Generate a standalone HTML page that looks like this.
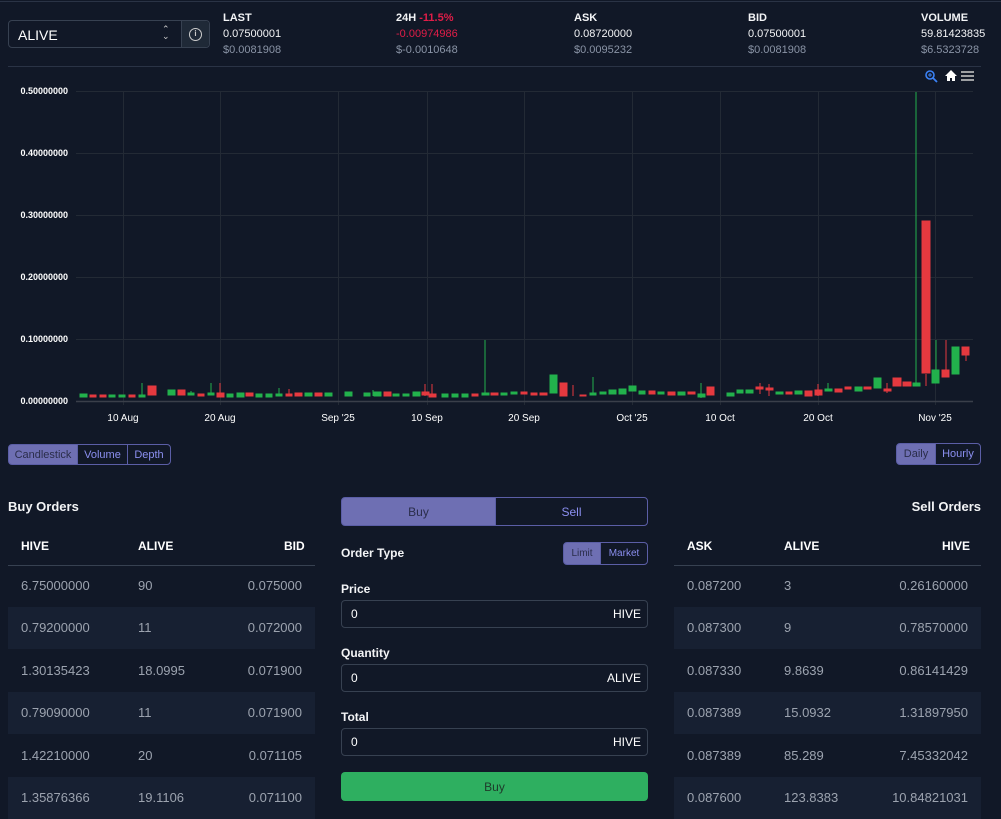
<!DOCTYPE html>
<html><head><meta charset="utf-8"><style>
*{box-sizing:border-box;margin:0;padding:0}
body{width:1001px;height:817px;overflow:hidden;background:#111827;font-family:"Liberation Sans",sans-serif;color:#e5e7eb;position:relative}
.a{position:absolute}
.lbl{font-size:11px;font-weight:bold;color:#f3f4f6}
.v{font-size:11px;color:#f3f4f6}
.u{font-size:11px;color:#8a94a6}
.btn{position:absolute;font-size:11px;display:flex;align-items:center;justify-content:center;border:1px solid #5b5ea6;color:#8b8ff0}
.on{background:#6e6fb3;color:#2a2d4a}
.row{position:relative;height:42.5px;font-size:13px;color:#9ca3af;display:flex;align-items:center}
.row span{position:absolute}
.alt{background:#172032}
.hd{font-size:12px;font-weight:bold;color:#fff}
.inp{position:absolute;left:341px;width:307px;height:28px;border:1px solid #374151;border-radius:4px;font-size:12px;color:#fff;display:flex;align-items:center;justify-content:space-between;padding:0 6px 0 9px}
.fl{position:absolute;left:341px;font-size:12px;font-weight:bold;color:#f3f4f6}
</style></head><body>
<div class="a" style="left:0;top:1px;width:1001px;height:1px;background:#2a3345"></div>
<div class="a" style="left:8px;top:20px;width:202px;height:28px;border:1px solid #374151;border-radius:4px"></div>
<div class="a" style="left:18px;top:27px;font-size:14px;color:#fff">ALIVE</div>
<div class="a" style="left:162px;top:26px;font-size:9px;color:#ccc;line-height:7px">⌃<br>⌄</div>
<div class="a" style="left:181px;top:21px;width:28px;height:26px;background:#1f2937;border-left:1px solid #374151;border-radius:0 4px 4px 0"></div>
<div class="a" style="left:189px;top:28px;width:13px;height:13px;border:1.5px solid #ccc;border-radius:50%;font-size:8px;color:#ccc;text-align:center;line-height:10px;font-weight:bold">i</div>

<div class="a lbl" style="left:223px;top:12px">LAST</div><div class="a v" style="left:223px;top:28px">0.07500001</div><div class="a u" style="left:223px;top:44px">$0.0081908</div>
<div class="a lbl" style="left:396px;top:12px">24H <span style="color:#e11d48">-11.5%</span></div><div class="a v" style="left:396px;top:28px;color:#e11d48">-0.00974986</div><div class="a u" style="left:396px;top:44px">$-0.0010648</div>
<div class="a lbl" style="left:574px;top:12px">ASK</div><div class="a v" style="left:574px;top:28px">0.08720000</div><div class="a u" style="left:574px;top:44px">$0.0095232</div>
<div class="a lbl" style="left:748px;top:12px">BID</div><div class="a v" style="left:748px;top:28px">0.07500001</div><div class="a u" style="left:748px;top:44px">$0.0081908</div>
<div class="a lbl" style="left:921px;top:12px">VOLUME</div><div class="a v" style="left:921px;top:28px">59.81423835</div><div class="a u" style="left:921px;top:44px">$6.5323728</div>
<div class="a" style="left:8px;top:66px;width:973px;height:1px;background:#2a3345"></div>

<svg class="a" style="left:0;top:0" width="1001" height="440">
<g stroke="#232a35" stroke-width="1">
<line x1="76" y1="91.5" x2="973" y2="91.5"/><line x1="76" y1="153.5" x2="973" y2="153.5"/><line x1="76" y1="215.5" x2="973" y2="215.5"/><line x1="76" y1="277.5" x2="973" y2="277.5"/><line x1="76" y1="339.5" x2="973" y2="339.5"/>
<line x1="123.5" y1="91" x2="123.5" y2="405"/><line x1="220.5" y1="91" x2="220.5" y2="405"/><line x1="338.5" y1="91" x2="338.5" y2="405"/><line x1="427.5" y1="91" x2="427.5" y2="405"/><line x1="524.5" y1="91" x2="524.5" y2="405"/><line x1="632.5" y1="91" x2="632.5" y2="405"/><line x1="720.5" y1="91" x2="720.5" y2="405"/><line x1="818.5" y1="91" x2="818.5" y2="405"/><line x1="935.5" y1="91" x2="935.5" y2="405"/>
</g>
<line x1="76" y1="401.5" x2="973" y2="401.5" stroke="#3a3f4a" stroke-width="1.5"/>
<g font-size="9" fill="#fff" font-weight="bold" text-anchor="end">
<text x="68" y="94">0.50000000</text><text x="68" y="156">0.40000000</text><text x="68" y="218">0.30000000</text><text x="68" y="280">0.20000000</text><text x="68" y="342">0.10000000</text><text x="68" y="404">0.00000000</text>
</g>
<g font-size="10" fill="#fff" text-anchor="middle">
<text x="123" y="421">10 Aug</text><text x="220" y="421">20 Aug</text><text x="338" y="421">Sep '25</text><text x="427" y="421">10 Sep</text><text x="524" y="421">20 Sep</text><text x="632" y="421">Oct '25</text><text x="720" y="421">10 Oct</text><text x="818" y="421">20 Oct</text><text x="935" y="421">Nov '25</text>
</g>
<g fill="#22b14c" stroke="#22b14c">
<rect x="80" y="394" width="7" height="3"/><rect x="109" y="395" width="6" height="2"/><rect x="119" y="395" width="6" height="2"/><line x1="142" y1="383" x2="142" y2="396"/><rect x="139" y="395" width="6" height="2"/>
<rect x="168" y="390" width="7" height="5"/><line x1="191" y1="391" x2="191" y2="395"/><rect x="188" y="393" width="6" height="2"/><line x1="211" y1="383" x2="211" y2="395"/><rect x="208" y="393" width="6" height="2"/>
<rect x="227" y="394" width="6" height="3"/><rect x="237" y="393" width="7" height="4"/><rect x="256" y="394" width="6" height="3"/><rect x="266" y="394" width="6" height="3"/><line x1="279" y1="388" x2="279" y2="396"/><rect x="276" y="394" width="6" height="2"/>
<rect x="305" y="393" width="7" height="3"/><rect x="325" y="393" width="7" height="3"/><rect x="345" y="392" width="7" height="4"/><rect x="364" y="393" width="6" height="3"/><line x1="373" y1="390" x2="373" y2="396"/><rect x="374" y="392" width="7" height="4"/>
<rect x="393" y="394" width="6" height="2"/><rect x="403" y="394" width="6" height="2"/><rect x="413" y="392" width="7" height="4"/><rect x="442" y="394" width="6" height="3"/><rect x="452" y="394" width="6" height="3"/><rect x="462" y="394" width="6" height="3"/>
<line x1="485" y1="340" x2="485" y2="394"/><rect x="482" y="393" width="7" height="2"/><rect x="501" y="393" width="6" height="2"/><rect x="511" y="392" width="6" height="2"/>
<rect x="550" y="375" width="7" height="18"/><line x1="593" y1="377" x2="593" y2="394"/><rect x="590" y="393" width="6" height="2"/><rect x="600" y="392" width="6" height="2"/><rect x="609" y="390" width="7" height="4"/><rect x="619" y="389" width="7" height="5"/><rect x="629" y="386" width="7" height="5"/>
<rect x="639" y="391" width="6" height="3"/><rect x="658" y="392" width="6" height="2"/><rect x="678" y="392" width="7" height="3"/><line x1="701" y1="383" x2="701" y2="398"/><rect x="698" y="394" width="7" height="3"/>
<rect x="727" y="393" width="7" height="3"/><rect x="737" y="390" width="6" height="3"/><rect x="746" y="390" width="7" height="3"/><rect x="776" y="392" width="7" height="2"/><rect x="795" y="391" width="7" height="3"/>
<line x1="828" y1="383" x2="828" y2="391"/><rect x="825" y="389" width="7" height="2"/><rect x="855" y="387" width="7" height="4"/><rect x="874" y="378" width="7" height="10"/>
<line x1="916" y1="92" x2="916" y2="386"/><rect x="913" y="383" width="7" height="3"/>
<line x1="936" y1="340" x2="936" y2="383"/><rect x="932" y="370" width="7" height="13"/><rect x="952" y="347" width="7" height="27"/>
</g>
<g fill="#e5393f" stroke="#e5393f">
<rect x="90" y="395" width="6" height="2"/><rect x="100" y="395" width="6" height="2"/><rect x="129" y="395" width="6" height="2"/><rect x="148" y="386" width="8" height="9"/><rect x="178" y="390" width="7" height="5"/><rect x="198" y="394" width="6" height="2"/>
<line x1="220" y1="383" x2="220" y2="397"/><rect x="217" y="393" width="7" height="4"/><rect x="246" y="393" width="7" height="3"/><line x1="289" y1="389" x2="289" y2="396"/><rect x="286" y="394" width="6" height="2"/><rect x="295" y="393" width="7" height="3"/>
<rect x="315" y="393" width="7" height="3"/><rect x="384" y="392" width="7" height="4"/><line x1="425" y1="384" x2="425" y2="396"/><rect x="422" y="392" width="7" height="3"/><line x1="432" y1="384" x2="432" y2="397"/><rect x="429" y="394" width="7" height="3"/>
<rect x="472" y="394" width="6" height="2"/><rect x="491" y="393" width="7" height="2"/><rect x="521" y="392" width="6" height="2"/><rect x="531" y="393" width="6" height="2"/><rect x="540" y="393" width="7" height="2"/><rect x="560" y="383" width="7" height="13"/>
<line x1="573" y1="385" x2="573" y2="396"/><rect x="580" y="395" width="6" height="1"/><rect x="649" y="391" width="6" height="3"/><rect x="668" y="392" width="7" height="3"/><rect x="688" y="392" width="7" height="2"/><rect x="707" y="387" width="7" height="8"/>
<line x1="760" y1="383" x2="760" y2="394"/><rect x="756" y="387" width="7" height="2"/><rect x="766" y="388" width="7" height="2"/><line x1="769" y1="384" x2="769" y2="396"/><rect x="786" y="392" width="6" height="2"/><rect x="805" y="391" width="7" height="5"/><line x1="818" y1="384" x2="818" y2="396"/><rect x="815" y="390" width="7" height="5"/>
<rect x="835" y="389" width="7" height="3"/><rect x="845" y="387" width="6" height="2"/><rect x="864" y="387" width="7" height="2"/><line x1="887" y1="383" x2="887" y2="393"/><rect x="884" y="389" width="7" height="2"/><rect x="893" y="378" width="8" height="8"/><rect x="903" y="382" width="8" height="4"/>
<line x1="926" y1="374" x2="926" y2="386"/><rect x="922" y="221" width="8" height="152"/><line x1="946" y1="340" x2="946" y2="374"/><rect x="942" y="370" width="7" height="7"/><line x1="966" y1="355" x2="966" y2="361"/><rect x="962" y="347" width="7" height="8"/>
</g>
<circle cx="930" cy="75" r="4" fill="none" stroke="#3b82f6" stroke-width="1.6"/><line x1="933" y1="78" x2="937" y2="82" stroke="#3b82f6" stroke-width="1.8"/><path d="M928 75h4M930 73v4" stroke="#3b82f6" stroke-width="1"/>
<path d="M945 76l6-6 6 6h-2v5h-3v-3h-2v3h-3v-5z" fill="#fff"/>
<path d="M961 72h13M961 76h13M961 80h13" stroke="#ccc" stroke-width="1.6"/>
</svg>

<div class="btn on" style="left:8px;top:444px;width:70px;height:21px;border-radius:4px 0 0 4px">Candlestick</div>
<div class="btn" style="left:77px;top:444px;width:51px;height:21px">Volume</div>
<div class="btn" style="left:127px;top:444px;width:44px;height:21px;border-radius:0 4px 4px 0">Depth</div>
<div class="btn on" style="left:896px;top:443px;width:40px;height:22px;border-radius:4px 0 0 4px">Daily</div>
<div class="btn" style="left:935px;top:443px;width:46px;height:22px;border-radius:0 4px 4px 0">Hourly</div>

<div class="a" style="left:8px;top:499px;font-size:13px;font-weight:bold;color:#f3f4f6">Buy Orders</div>
<div class="a" style="right:20px;top:499px;font-size:13px;font-weight:bold;color:#f3f4f6">Sell Orders</div>

<div class="a hd" style="left:21px;top:539px">HIVE</div><div class="a hd" style="left:138px;top:539px">ALIVE</div><div class="a hd" style="left:284px;top:539px">BID</div>
<div class="a" style="left:8px;top:565px;width:307px;height:1px;background:#374151"></div>
<div class="a hd" style="left:687px;top:539px">ASK</div><div class="a hd" style="left:784px;top:539px">ALIVE</div><div class="a hd" style="left:942px;top:539px">HIVE</div>
<div class="a" style="left:674px;top:565px;width:307px;height:1px;background:#374151"></div>

<div class="a" style="left:8px;top:564px;width:307px">
<div class="row"><span style="left:13px">6.75000000</span><span style="left:130px">90</span><span style="right:13px">0.075000</span></div>
<div class="row alt"><span style="left:13px">0.79200000</span><span style="left:130px">11</span><span style="right:13px">0.072000</span></div>
<div class="row"><span style="left:13px">1.30135423</span><span style="left:130px">18.0995</span><span style="right:13px">0.071900</span></div>
<div class="row alt"><span style="left:13px">0.79090000</span><span style="left:130px">11</span><span style="right:13px">0.071900</span></div>
<div class="row"><span style="left:13px">1.42210000</span><span style="left:130px">20</span><span style="right:13px">0.071105</span></div>
<div class="row alt"><span style="left:13px">1.35876366</span><span style="left:130px">19.1106</span><span style="right:13px">0.071100</span></div>
</div>
<div class="a" style="left:674px;top:564px;width:307px">
<div class="row"><span style="left:13px">0.087200</span><span style="left:110px">3</span><span style="right:13px">0.26160000</span></div>
<div class="row alt"><span style="left:13px">0.087300</span><span style="left:110px">9</span><span style="right:13px">0.78570000</span></div>
<div class="row"><span style="left:13px">0.087330</span><span style="left:110px">9.8639</span><span style="right:13px">0.86141429</span></div>
<div class="row alt"><span style="left:13px">0.087389</span><span style="left:110px">15.0932</span><span style="right:13px">1.31897950</span></div>
<div class="row"><span style="left:13px">0.087389</span><span style="left:110px">85.289</span><span style="right:13px">7.45332042</span></div>
<div class="row alt"><span style="left:13px">0.087600</span><span style="left:110px">123.8383</span><span style="right:13px">10.84821031</span></div>
</div>

<div class="btn on" style="left:341px;top:497px;width:155px;height:29px;border-radius:4px 0 0 4px;font-size:12px;color:#2a2d4a">Buy</div>
<div class="btn" style="left:495px;top:497px;width:153px;height:29px;border-radius:0 4px 4px 0;font-size:12px">Sell</div>
<div class="fl" style="top:546px">Order Type</div>
<div class="btn on" style="left:563px;top:542px;width:38px;height:23px;border-radius:4px 0 0 4px;font-size:10px">Limit</div>
<div class="btn" style="left:600px;top:542px;width:48px;height:23px;border-radius:0 4px 4px 0;font-size:10px">Market</div>
<div class="fl" style="top:582px">Price</div>
<div class="inp" style="top:600px"><span>0</span><span>HIVE</span></div>
<div class="fl" style="top:646px">Quantity</div>
<div class="inp" style="top:664px"><span>0</span><span>ALIVE</span></div>
<div class="fl" style="top:710px">Total</div>
<div class="inp" style="top:728px"><span>0</span><span>HIVE</span></div>
<div class="a" style="left:341px;top:772px;width:307px;height:29px;background:#2eaf60;border-radius:4px;font-size:12px;color:#1e3a2a;display:flex;align-items:center;justify-content:center">Buy</div>
</body></html>
